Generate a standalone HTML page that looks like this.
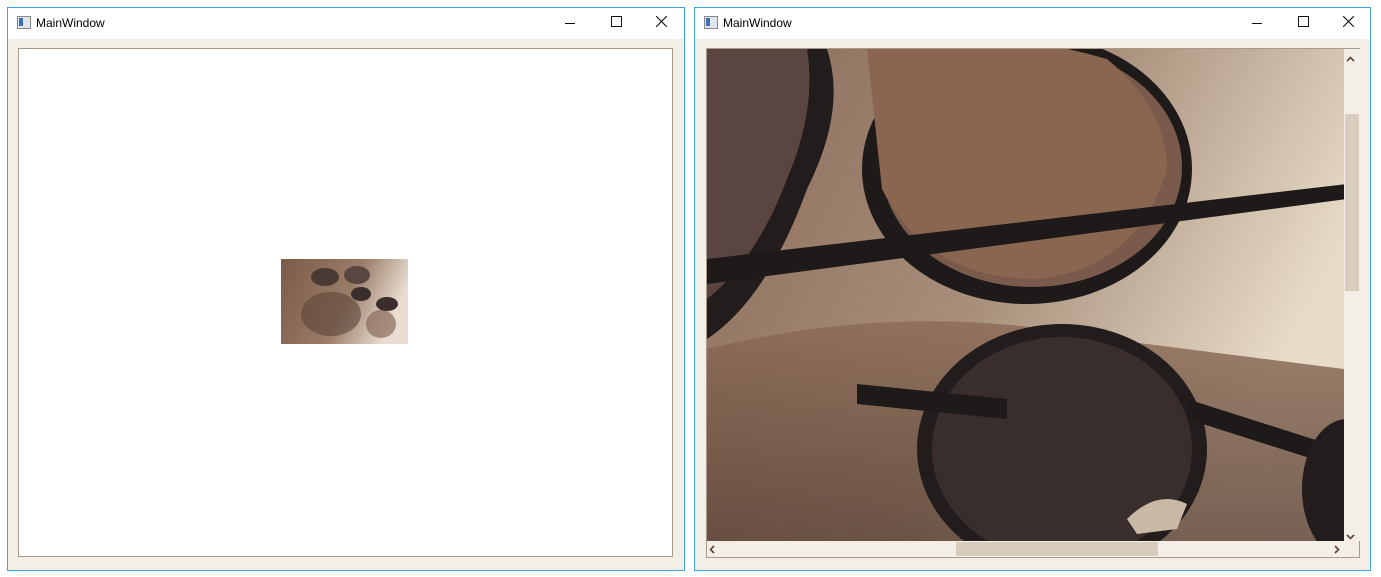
<!DOCTYPE html>
<html><head><style>
body{margin:0;width:1381px;height:577px;background:#fff;position:relative;overflow:hidden;font-family:"Liberation Sans",sans-serif}
.win{position:absolute;top:7px;height:562px;border:1px solid #3fa2e6;background:#f4efe6}
.tb{position:absolute;left:0;right:0;top:0;height:31px;background:#fff}
.tt{position:absolute;left:28px;top:8px;font-size:12px;color:#000}
.ic{position:absolute;left:9px;top:8px;width:12px;height:11px;border:1px solid #888;background:#dfe6ee}
.ic:before{content:"";position:absolute;left:1px;top:1px;width:4px;height:8px;background:#3a6fb0}
.box{position:absolute;border:1px solid #a8998a;background:#fff}
</style></head><body>
<div class="win" style="left:7px;width:676px">
 <div class="tb"><div class="ic"></div><div class="tt">MainWindow</div>
  <div style="position:absolute;left:557px;top:15px;width:10px;height:1px;background:#111"></div>
  <div style="position:absolute;left:603px;top:8px;width:9px;height:9px;border:1px solid #111"></div>
  <svg style="position:absolute;left:648px;top:8px" width="11" height="11"><path d="M0 0L11 11M11 0L0 11" stroke="#111" stroke-width="1.1"/></svg>
 </div>
 <div class="box" style="left:10px;top:40px;width:653px;height:507px"></div>
 <svg style="position:absolute;left:273px;top:251px" width="127" height="85" viewBox="0 0 127 85">
  <defs><linearGradient id="g1" x1="0" y1="0" x2="1" y2="0.3"><stop offset="0" stop-color="#7a5a48"/><stop offset="0.6" stop-color="#9a7c68"/><stop offset="1" stop-color="#e8ddd0"/></linearGradient></defs>
  <rect width="127" height="85" fill="url(#g1)"/>
  <ellipse cx="50" cy="55" rx="30" ry="22" fill="#5a4438" opacity=".6"/>
  <ellipse cx="100" cy="65" rx="15" ry="14" fill="#8a6a58" opacity=".7"/>
  <ellipse cx="44" cy="18" rx="14" ry="9" fill="#4a3a34"/>
  <ellipse cx="76" cy="16" rx="13" ry="9" fill="#5a4640"/>
  <ellipse cx="80" cy="35" rx="10" ry="7" fill="#3a2e2c"/>
  <ellipse cx="106" cy="45" rx="11" ry="7" fill="#3a2e2c"/>
 </svg>
</div>
<div class="win" style="left:694px;width:675px">
 <div class="tb"><div class="ic"></div><div class="tt">MainWindow</div>
  <div style="position:absolute;left:557px;top:15px;width:10px;height:1px;background:#111"></div>
  <div style="position:absolute;left:603px;top:8px;width:9px;height:9px;border:1px solid #111"></div>
  <svg style="position:absolute;left:648px;top:8px" width="11" height="11"><path d="M0 0L11 11M11 0L0 11" stroke="#111" stroke-width="1.1"/></svg>
 </div>
 <div class="box" style="left:11px;top:40px;width:652px;height:508px;background:#f4efe6"></div>
 <svg style="position:absolute;left:12px;top:41px" width="637" height="492" viewBox="0 0 637 492">
  <defs>
   <linearGradient id="bg" x1="0" y1="0" x2="1" y2="0.4"><stop offset="0" stop-color="#8a6a58"/><stop offset="0.55" stop-color="#a8907c"/><stop offset="1" stop-color="#e8dcc8"/></linearGradient>
   <linearGradient id="fl" x1="0" y1="0" x2="0" y2="1"><stop offset="0" stop-color="#8c6a56"/><stop offset="1" stop-color="#5a4236"/></linearGradient>
  </defs>
  <rect width="637" height="492" fill="url(#bg)"/>
  <path d="M0 300 Q200 250 400 290 L637 320 L637 492 L0 492Z" fill="url(#fl)" opacity=".8"/>
  <path d="M0 0 L120 0 Q140 60 100 140 Q60 250 0 290Z" fill="#221c1c"/>
  <path d="M0 0 L100 0 Q110 60 80 130 Q50 210 0 250Z" fill="#5a4540"/>
  <ellipse cx="320" cy="120" rx="165" ry="135" fill="#1e1a1a"/>
  <ellipse cx="325" cy="118" rx="150" ry="120" fill="#7a5a4a"/>
  <path d="M160 0 Q260 -30 400 10 Q460 60 460 120 Q430 220 330 230 Q220 230 175 140Z" fill="#8a6650"/>
  <path d="M0 210 L640 135 L640 150 L0 235Z" fill="#1e1a1a"/>
  <ellipse cx="355" cy="400" rx="145" ry="125" fill="#221c1c"/>
  <ellipse cx="355" cy="400" rx="130" ry="112" fill="#3a2e2c"/>
  <path d="M150 335 L300 350 L300 370 L150 355Z" fill="#1e1a1a"/>
  <path d="M480 350 L637 400 L637 420 L480 370Z" fill="#1e1a1a"/>
  <ellipse cx="640" cy="440" rx="45" ry="70" fill="#221c1c"/>
  <path d="M420 470 Q450 440 480 455 L470 480 L430 485Z" fill="#c8b8a4"/>
 </svg>
 <div style="position:absolute;left:649px;top:41px;width:16px;height:492px;background:#f4efe6"></div>
 <div style="position:absolute;left:650px;top:106px;width:14px;height:177px;background:#d8ccbc"></div>
 <div style="position:absolute;left:12px;top:533px;width:637px;height:15px;background:#f4efe6"></div>
 <div style="position:absolute;left:261px;top:534px;width:202px;height:14px;background:#d8ccbc"></div>
 <svg style="position:absolute;left:12px;top:41px" width="653" height="508">
  <path d="M640 12L643.5 8.5L647 12" stroke="#5a4436" stroke-width="1.6" fill="none"/>
  <path d="M640 486L643.5 489.5L647 486" stroke="#5a4436" stroke-width="1.6" fill="none"/>
  <path d="M7 497L3.5 500.5L7 504" stroke="#5a4436" stroke-width="1.6" fill="none"/>
  <path d="M628 497L631.5 500.5L628 504" stroke="#5a4436" stroke-width="1.6" fill="none"/>
 </svg>
</div>
</body></html>
